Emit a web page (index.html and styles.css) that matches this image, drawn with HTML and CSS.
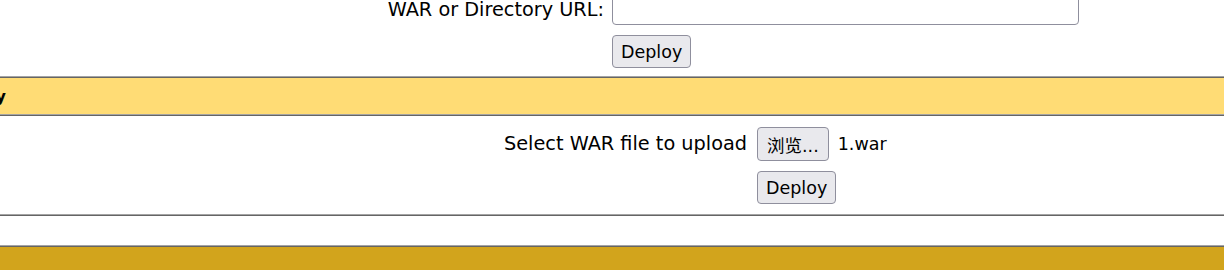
FILE: index.html
```html
<!DOCTYPE html>
<html>
<head>
<meta charset="utf-8">
<link rel="stylesheet" href="styles.css">
</head>
<body>
<div class="page">
  <div class="row url-row">
    <div class="form-grid url-grid">
      <span class="label">WAR or Directory URL:</span>
      <input class="text-input" type="text">
      <span></span>
      <div><button class="btn" type="button">Deploy</button></div>
    </div>
  </div>
  <div class="row header-row">
    <div class="header-text">WAR file to deploy</div>
  </div>
  <div class="row upload-row">
    <div class="form-grid upload-grid">
      <span class="label">Select WAR file to upload</span>
      <div class="file-input">
        <button class="btn file-btn" type="button">浏览...</button>
        <span class="file-name">1.war</span>
      </div>
      <span></span>
      <div><button class="btn" type="button">Deploy</button></div>
    </div>
  </div>
  <div class="row spacer-row"></div>
  <div class="row title-row"></div>
</div>
</body>
</html>
```
FILE: styles.css
```css
html, body {
  margin: 0;
  padding: 0;
  background: #ffffff;
  overflow: hidden;
}

.page {
  width: 1224px;
  height: 270px;
  overflow: hidden;
  font-family: "DejaVu Sans", "Noto Sans CJK SC", sans-serif;
  color: #000000;
}

.row {
  border-top: 1px solid #656565;
  border-bottom: 1px solid #a4a4a4;
}

.url-row {
  border-top: none;
  height: 76px;
  overflow: hidden;
}

.form-grid {
  display: grid;
  align-items: center;
  row-gap: 10px;
}

.url-grid {
  grid-template-columns: 604px auto;
  column-gap: 8px;
  margin-top: -6px;
}

.label {
  font-size: 19.3px;
  line-height: 20px;
  text-align: right;
  white-space: nowrap;
}

.url-grid .label {
  padding-top: 1px;
}

.text-input {
  box-sizing: border-box;
  width: 467px;
  height: 31px;
  border: 1px solid #8f8f9d;
  border-radius: 4px;
  background: #ffffff;
  margin: 0;
}

.btn {
  box-sizing: border-box;
  height: 33px;
  padding: 0 8px;
  margin: 0;
  font-family: "DejaVu Sans", "Noto Sans CJK SC", sans-serif;
  font-size: 17.5px;
  color: #000000;
  background: #e9e9ed;
  border: 1px solid #8f8f9d;
  border-radius: 4px;
}

.header-row {
  height: 36px;
  background: #ffdc75;
  display: flex;
  align-items: center;
  overflow: hidden;
}

.header-text {
  flex: none;
  width: 306px;
  margin-left: -300px;
  text-align: right;
  font-weight: bold;
  font-size: 16px;
  white-space: nowrap;
}

.upload-row {
  height: 98px;
}

.upload-grid {
  grid-template-columns: 747px auto;
  column-gap: 10px;
  padding-top: 11px;
}

.file-input {
  display: flex;
  align-items: center;
  gap: 9px;
}

.file-btn {
  height: 34px;
  padding: 0 9px;
}

.file-name {
  font-size: 17.5px;
}

.spacer-row {
  height: 29px;
}

.title-row {
  height: 23px;
  background: #d2a41c;
  border-bottom: none;
}
```
